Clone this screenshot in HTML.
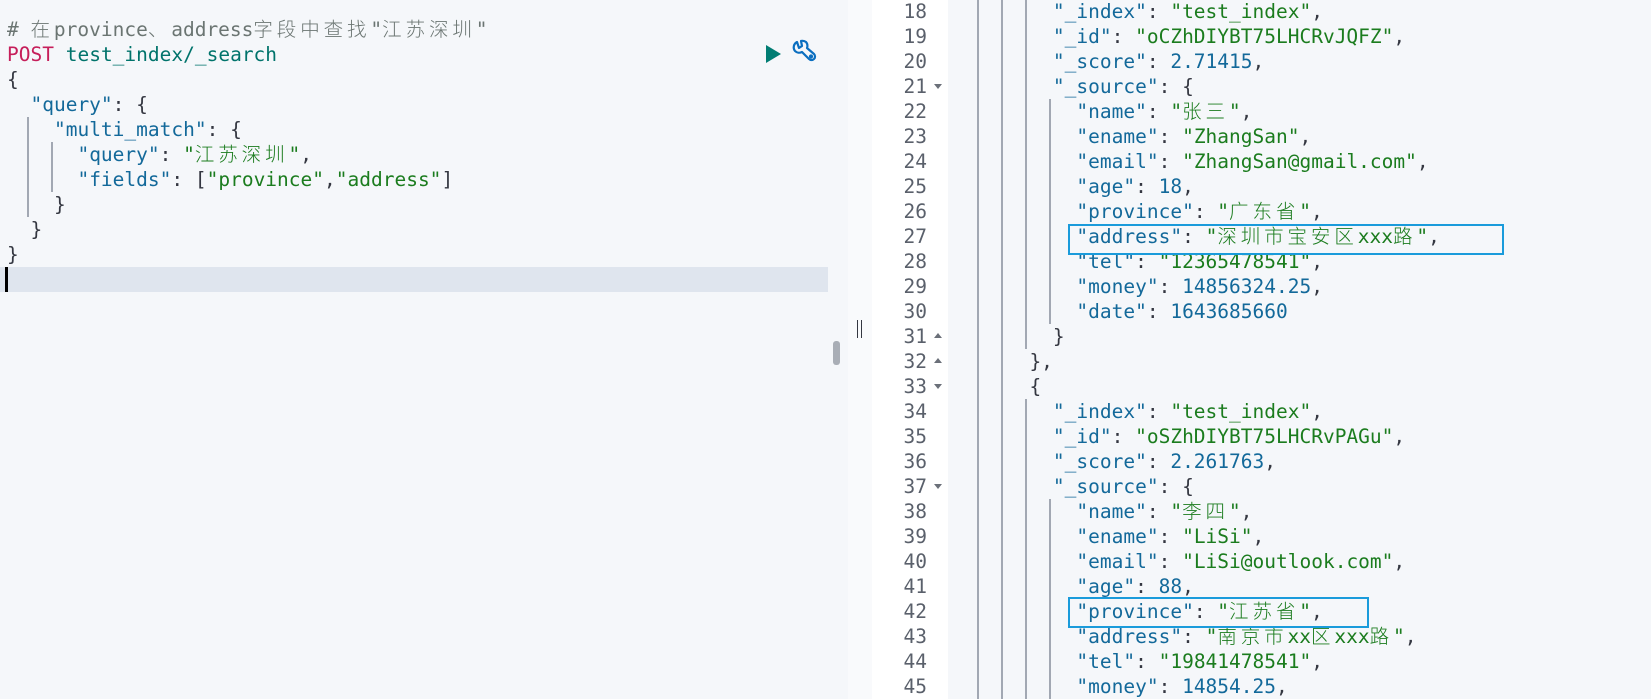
<!DOCTYPE html>
<html><head><meta charset="utf-8"><style>
html,body{margin:0;padding:0;width:1651px;height:699px;overflow:hidden;background:#f5f7fa;position:relative}
.ln{position:absolute;white-space:pre;font-family:"DejaVu Sans Mono","Liberation Mono",monospace;font-size:19.5px;line-height:25px;height:25px;color:#343741}
.z{font-family:"Noto Sans CJK SC",sans-serif;letter-spacing:3.9px;font-weight:300;line-height:0;font-size:19.5px}
.k{color:#13699a}.s{color:#1b7c1e}.n{color:#13699a}.c{color:#6b7572}.m{color:#c61e5a}.p{color:#00736b}
.g{position:absolute;width:2px;background:#a2a8b3}
.num{position:absolute;left:872px;width:55px;text-align:right;font-family:"DejaVu Sans Mono","Liberation Mono",monospace;font-size:19.5px;line-height:25px;color:#5a606b}
.ar{position:absolute;left:934px;width:0;height:0;border-left:4px solid transparent;border-right:4px solid transparent}
.dn{border-top:5px solid #6b7079}.up{border-bottom:5px solid #6b7079}
.box{position:absolute;border:2px solid #1a9bdb;box-sizing:border-box}
</style></head><body>
<div style="position:absolute;left:848px;top:0;width:24px;height:699px;background:#f9fafc"></div>
<div style="position:absolute;left:872px;top:0;width:76px;height:699px;background:#fff"></div>
<div style="position:absolute;left:0;top:267px;width:828px;height:25px;background:#dfe5ee"></div>
<div style="position:absolute;left:5px;top:267px;width:3px;height:25px;background:#000"></div>
<div style="position:absolute;left:833px;top:341px;width:7px;height:24px;background:#a9aeb6;border-radius:3px"></div>
<div style="position:absolute;left:857px;top:320px;width:1px;height:18px;background:#343741"></div>
<div style="position:absolute;left:861px;top:320px;width:1px;height:18px;background:#343741"></div>
<svg style="position:absolute;left:764px;top:44px" width="20" height="20"><path d="M2 1 L17 10 L2 19 Z" fill="#017d73"/></svg>
<svg style="position:absolute;left:790px;top:38px" width="30" height="30" viewBox="0 0 30 30" fill="none" stroke="#0b6fc0" stroke-width="2.2" stroke-linejoin="round"><path d="M7 4 A6 6 0 0 0 5 13 A6 6 0 0 0 12 14 L19 21 A3.5 3.5 0 0 0 24 16 L17 10 A6 6 0 0 0 16 4 A6 6 0 0 0 11 3 L12 8 L9 10 Z"/><circle cx="21" cy="18.5" r="1" fill="#0b6fc0"/></svg>

<div class="g" style="left:27px;top:117px;height:100px"></div>
<div class="g" style="left:51px;top:142px;height:50px"></div>

<div class="ln" style="left:7px;top:17px"><span class="c"># <span class="z">在</span>province<span class="z">、</span>address<span class="z">字段中查找</span>"<span class="z">江苏深圳</span>"</span></div>
<div class="ln" style="left:7px;top:42px"><span class="m">POST</span> <span class="p">test_index/_search</span></div>
<div class="ln" style="left:7px;top:67px">{</div>
<div class="ln" style="left:7px;top:92px">  <span class="k">"query"</span>: {</div>
<div class="ln" style="left:7px;top:117px">    <span class="k">"multi_match"</span>: {</div>
<div class="ln" style="left:7px;top:142px">      <span class="k">"query"</span>: <span class="s">"<span class="z">江苏深圳</span>"</span>,</div>
<div class="ln" style="left:7px;top:167px">      <span class="k">"fields"</span>: [<span class="s">"province"</span>,<span class="s">"address"</span>]</div>
<div class="ln" style="left:7px;top:192px">    }</div>
<div class="ln" style="left:7px;top:217px">  }</div>
<div class="ln" style="left:7px;top:242px">}</div>

<div class="g" style="left:977px;top:0;height:699px"></div>
<div class="g" style="left:1001px;top:0;height:699px"></div>
<div class="g" style="left:1025px;top:0;height:349px"></div>
<div class="g" style="left:1025px;top:399px;height:300px"></div>
<div class="g" style="left:1049px;top:99px;height:225px"></div>
<div class="g" style="left:1049px;top:499px;height:200px"></div>

<div class="num" style="top:-1px">18</div>
<div class="num" style="top:24px">19</div>
<div class="num" style="top:49px">20</div>
<div class="num" style="top:74px">21</div>
<div class="num" style="top:99px">22</div>
<div class="num" style="top:124px">23</div>
<div class="num" style="top:149px">24</div>
<div class="num" style="top:174px">25</div>
<div class="num" style="top:199px">26</div>
<div class="num" style="top:224px">27</div>
<div class="num" style="top:249px">28</div>
<div class="num" style="top:274px">29</div>
<div class="num" style="top:299px">30</div>
<div class="num" style="top:324px">31</div>
<div class="num" style="top:349px">32</div>
<div class="num" style="top:374px">33</div>
<div class="num" style="top:399px">34</div>
<div class="num" style="top:424px">35</div>
<div class="num" style="top:449px">36</div>
<div class="num" style="top:474px">37</div>
<div class="num" style="top:499px">38</div>
<div class="num" style="top:524px">39</div>
<div class="num" style="top:549px">40</div>
<div class="num" style="top:574px">41</div>
<div class="num" style="top:599px">42</div>
<div class="num" style="top:624px">43</div>
<div class="num" style="top:649px">44</div>
<div class="num" style="top:674px">45</div>
<div class="ar dn" style="top:84px"></div>
<div class="ar up" style="top:333px"></div>
<div class="ar up" style="top:358px"></div>
<div class="ar dn" style="top:384px"></div>
<div class="ar dn" style="top:484px"></div>

<div class="ln" style="left:959px;top:-1px">        <span class="k">"_index"</span>: <span class="s">"test_index"</span>,</div>
<div class="ln" style="left:959px;top:24px">        <span class="k">"_id"</span>: <span class="s">"oCZhDIYBT75LHCRvJQFZ"</span>,</div>
<div class="ln" style="left:959px;top:49px">        <span class="k">"_score"</span>: <span class="n">2.71415</span>,</div>
<div class="ln" style="left:959px;top:74px">        <span class="k">"_source"</span>: {</div>
<div class="ln" style="left:959px;top:99px">          <span class="k">"name"</span>: <span class="s">"<span class="z">张三</span>"</span>,</div>
<div class="ln" style="left:959px;top:124px">          <span class="k">"ename"</span>: <span class="s">"ZhangSan"</span>,</div>
<div class="ln" style="left:959px;top:149px">          <span class="k">"email"</span>: <span class="s">"ZhangSan@gmail.com"</span>,</div>
<div class="ln" style="left:959px;top:174px">          <span class="k">"age"</span>: <span class="n">18</span>,</div>
<div class="ln" style="left:959px;top:199px">          <span class="k">"province"</span>: <span class="s">"<span class="z">广东省</span>"</span>,</div>
<div class="ln" style="left:959px;top:224px">          <span class="k">"address"</span>: <span class="s">"<span class="z">深圳市宝安区</span>xxx<span class="z">路</span>"</span>,</div>
<div class="ln" style="left:959px;top:249px">          <span class="k">"tel"</span>: <span class="s">"12365478541"</span>,</div>
<div class="ln" style="left:959px;top:274px">          <span class="k">"money"</span>: <span class="n">14856324.25</span>,</div>
<div class="ln" style="left:959px;top:299px">          <span class="k">"date"</span>: <span class="n">1643685660</span></div>
<div class="ln" style="left:959px;top:324px">        }</div>
<div class="ln" style="left:959px;top:349px">      },</div>
<div class="ln" style="left:959px;top:374px">      {</div>
<div class="ln" style="left:959px;top:399px">        <span class="k">"_index"</span>: <span class="s">"test_index"</span>,</div>
<div class="ln" style="left:959px;top:424px">        <span class="k">"_id"</span>: <span class="s">"oSZhDIYBT75LHCRvPAGu"</span>,</div>
<div class="ln" style="left:959px;top:449px">        <span class="k">"_score"</span>: <span class="n">2.261763</span>,</div>
<div class="ln" style="left:959px;top:474px">        <span class="k">"_source"</span>: {</div>
<div class="ln" style="left:959px;top:499px">          <span class="k">"name"</span>: <span class="s">"<span class="z">李四</span>"</span>,</div>
<div class="ln" style="left:959px;top:524px">          <span class="k">"ename"</span>: <span class="s">"LiSi"</span>,</div>
<div class="ln" style="left:959px;top:549px">          <span class="k">"email"</span>: <span class="s">"LiSi@outlook.com"</span>,</div>
<div class="ln" style="left:959px;top:574px">          <span class="k">"age"</span>: <span class="n">88</span>,</div>
<div class="ln" style="left:959px;top:599px">          <span class="k">"province"</span>: <span class="s">"<span class="z">江苏省</span>"</span>,</div>
<div class="ln" style="left:959px;top:624px">          <span class="k">"address"</span>: <span class="s">"<span class="z">南京市</span>xx<span class="z">区</span>xxx<span class="z">路</span>"</span>,</div>
<div class="ln" style="left:959px;top:649px">          <span class="k">"tel"</span>: <span class="s">"19841478541"</span>,</div>
<div class="ln" style="left:959px;top:674px">          <span class="k">"money"</span>: <span class="n">14854.25</span>,</div>

<div class="box" style="left:1068px;top:224px;width:436px;height:31px"></div>
<div class="box" style="left:1068px;top:597px;width:301px;height:31px"></div>
</body></html>
